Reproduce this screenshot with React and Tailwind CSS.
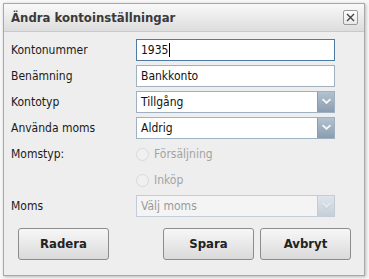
import React from "react";

const font = { fontFamily: '"DejaVu Sans Condensed", "DejaVu Sans", "Liberation Sans", sans-serif' };

function Chevron({ disabled }) {
  return (
    <svg width="11" height="8" viewBox="0 0 11 8">
      <path d="M1.5 2.2 L5.5 6 L9.5 2.2" fill="none" stroke={disabled ? "#8d99a5" : "#3f4b57"} strokeWidth="1.2" opacity="0.7" />
      <path d="M1.5 1.2 L5.5 5 L9.5 1.2" fill="none" stroke={disabled ? "#e6eaee" : "#f2f5f7"} strokeWidth="2.2" />
    </svg>
  );
}

function Select({ value, disabled }) {
  return (
    <div className={`flex h-[22px] w-[199px] border ${disabled ? "border-[#c3ccd6] bg-[#f4f4f4]" : "border-[#9fb0c1] bg-white"}`}>
      <div className={`flex flex-1 items-center px-[4px] text-[12px] ${disabled ? "text-[#9a9a9a]" : "text-[#111]"}`}>{value}</div>
      <div className={`flex w-[17px] items-center justify-center border-l ${disabled ? "border-[#c3ccd6] bg-gradient-to-b from-[#dfe5eb] to-[#c5ced8]" : "border-[#8b9cad] bg-gradient-to-b from-[#b4c2cf] to-[#8a9db0]"}`}>
        <Chevron disabled={disabled} />
      </div>
    </div>
  );
}

function Row({ label, children }) {
  return (
    <div className="flex h-[22px] items-center">
      <div className="w-[125px] text-[12px] text-[#1a1a1a]">{label}</div>
      {children}
    </div>
  );
}

function Radio({ label }) {
  return (
    <div className="flex items-center gap-[5px] text-[12px] text-[#a3a3a3]">
      <div className="h-[13px] w-[13px] rounded-full border border-[#d9d9d9] bg-[#f0f0f0]" />
      {label}
    </div>
  );
}

function Button({ children }) {
  return (
    <div className="flex h-[32px] w-[91px] items-center justify-center rounded-[3px] border border-[#8c8c8c] bg-gradient-to-b from-[#f7f7f7] to-[#dadada] text-[13px] font-bold text-[#222]">
      {children}
    </div>
  );
}

export default function App() {
  return (
    <div className="h-[279px] w-[369px] bg-[#f7f7f7] pl-[3px] pt-[3px]" style={font}>
      <div className="flex h-[273px] w-[362px] flex-col border border-[#a8a8a8] bg-[#eeeeee] shadow-[1px_1px_3px_rgba(0,0,0,0.25)]">
        <div className="flex h-[28px] items-center justify-between border-b border-[#c9c9c9] bg-gradient-to-b from-[#f9f9f9] to-[#dddddd] pl-[7px] pr-[6px]">
          <div className="text-[13px] font-bold text-[#3a3a3a]">Ändra kontoinställningar</div>
          <div className="flex h-[15px] w-[15px] items-center justify-center rounded-[2px] border border-[#9a9a9a] bg-gradient-to-b from-white to-[#e8e8e8]">
            <svg width="9" height="9" viewBox="0 0 9 9">
              <path d="M1 1 L8 8 M8 1 L1 8" stroke="#444" strokeWidth="1.4" />
            </svg>
          </div>
        </div>
        <div className="flex flex-col gap-[4px] pl-[7px] pt-[7px]">
          <Row label="Kontonummer">
            <div className="flex h-[22px] w-[199px] items-center border border-[#4e7aa6] bg-white px-[4px] text-[12px] text-[#111]">
              1935<span className="ml-[1px] inline-block h-[14px] w-[1px] bg-black" />
            </div>
          </Row>
          <Row label="Benämning">
            <div className="flex h-[22px] w-[199px] items-center border border-[#9fb0c1] bg-white px-[4px] text-[12px] text-[#111]">Bankkonto</div>
          </Row>
          <Row label="Kontotyp">
            <Select value="Tillgång" />
          </Row>
          <Row label="Använda moms">
            <Select value="Aldrig" />
          </Row>
          <Row label="Momstyp:">
            <Radio label="Försäljning" />
          </Row>
          <Row label="">
            <Radio label="Inköp" />
          </Row>
          <Row label="Moms">
            <Select value="Välj moms" disabled />
          </Row>
        </div>
        <div className="mt-[11px] flex pl-[14px]">
          <Button>Radera</Button>
          <div className="ml-[54px] flex gap-[6px]">
            <Button>Spara</Button>
            <Button>Avbryt</Button>
          </div>
        </div>
      </div>
    </div>
  );
}
